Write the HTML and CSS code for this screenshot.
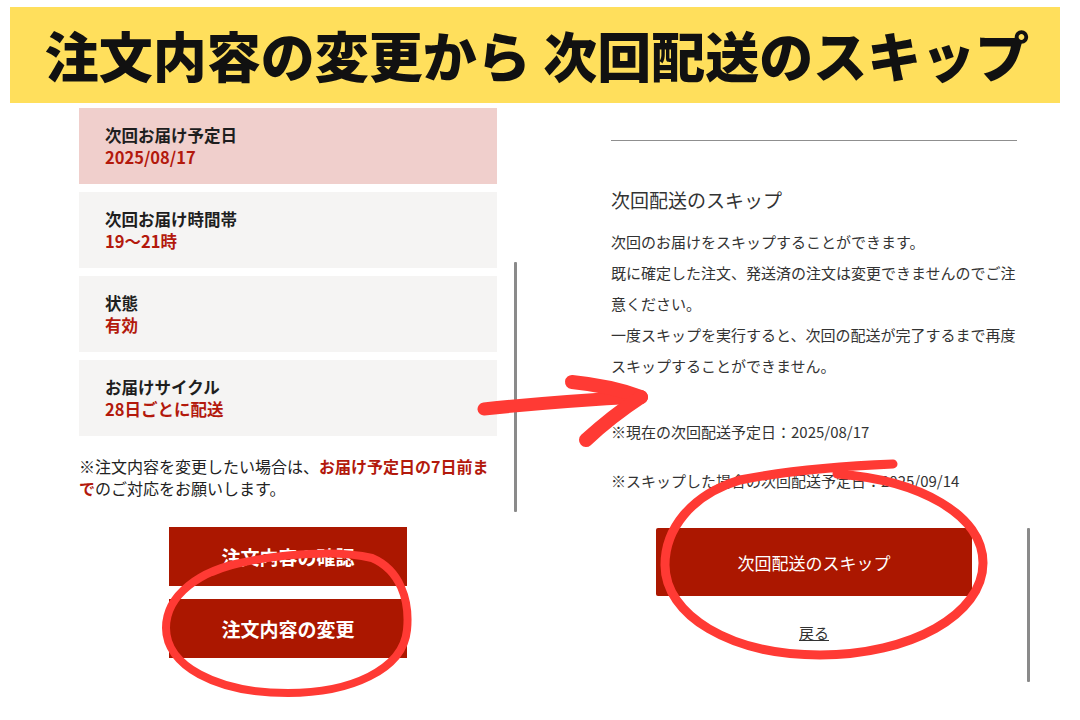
FILE: index.html
```html
<!DOCTYPE html>
<html lang="ja">
<head>
<meta charset="utf-8">
<title>注文内容の変更から 次回配送のスキップ</title>
<link rel="stylesheet" href="styles.css">
</head>
<body>
<div class="page">
  <header class="banner">
    <h1 class="title">注文内容の変更から 次回配送のスキップ</h1>
  </header>
  <main class="panels">
    <section class="left">
      <div class="cards">
        <div class="card card-hl">
          <p class="label">次回お届け予定日</p>
          <p class="value">2025/08/17</p>
        </div>
        <div class="card">
          <p class="label">次回お届け時間帯</p>
          <p class="value">19〜21時</p>
        </div>
        <div class="card">
          <p class="label">状態</p>
          <p class="value">有効</p>
        </div>
        <div class="card">
          <p class="label">お届けサイクル</p>
          <p class="value">28日ごとに配送</p>
        </div>
      </div>
      <p class="note">※注文内容を変更したい場合は、<strong class="em">お届け予定日の7日前ま<br>で</strong>のご対応をお願いします。</p>
      <div class="btns">
        <a class="btn btn-bold">注文内容の確認</a>
        <a class="btn btn-bold">注文内容の変更</a>
      </div>
    </section>
    <section class="right">
      <hr class="rule">
      <h2 class="heading">次回配送のスキップ</h2>
      <p class="para">次回のお届けをスキップすることができます。<br>既に確定した注文、発送済の注文は変更できませんのでご注<br>意ください。<br>一度スキップを実行すると、次回の配送が完了するまで再度<br>スキップすることができません。</p>
      <p class="para date-now">※現在の次回配送予定日：2025/08/17</p>
      <p class="para date-skip">※スキップした場合の次回配送予定日：2025/09/14</p>
      <div class="actions">
        <a class="btn btn-skip">次回配送のスキップ</a>
        <a class="back">戻る</a>
      </div>
    </section>
    <span class="scroll scroll-left"></span>
    <span class="scroll scroll-right"></span>
  </main>
  <svg class="marks" width="1080" height="720" viewBox="0 0 1080 720" aria-hidden="true">
    <g fill="none" stroke="#ff3a34" stroke-linecap="round" stroke-linejoin="round">
      <path d="M484,409 Q560,401 640,397" stroke-width="13"/>
      <path d="M572,382 Q612,386 641,397" stroke-width="14"/>
      <path d="M641,397 Q612,416 586,440" stroke-width="14"/>
      <path d="M212,572 C250,556 330,548 372,558 C400,570 410,600 407,630 C403,670 350,693 288,693 C215,693 166,665 166,628 C166,595 200,570 245,562" stroke-width="8"/>
      <path d="M893,464 C840,466 780,472 740,480 C690,495 665,530 665,565 C665,615 730,655 820,655 C910,655 983,615 983,563 C983,515 920,480 837,474" stroke-width="9"/>
    </g>
  </svg>
</div>
</body>
</html>
```
FILE: styles.css
```css
* { box-sizing: border-box; }
html, body { margin: 0; padding: 0; background: #fff; }
body {
  font-family: "Noto Sans CJK JP", "Noto Sans", sans-serif;
  color: #333;
}
.page {
  position: relative;
  width: 1080px;
  height: 720px;
  overflow: hidden;
}
.banner {
  margin: 7px 20px 0 10px;
  height: 96px;
  background: #ffdf5c;
  display: flex;
  align-items: center;
  justify-content: center;
}
.title {
  margin: 0;
  font-size: 54px;
  font-weight: 900;
  line-height: 1;
  color: #111;
  white-space: nowrap;
  padding-left: 4px;
}
.panels {
  position: relative;
  display: grid;
  grid-template-columns: 418px 406px;
  column-gap: 114px;
  padding-left: 79px;
}
.left { padding-top: 5px; }
.cards {
  display: flex;
  flex-direction: column;
  gap: 8px;
}
.card {
  height: 76px;
  background: #f5f4f3;
  padding-left: 26px;
  display: flex;
  flex-direction: column;
  justify-content: center;
}
.card-hl { background: #f0cfcc; }
.label, .value {
  margin: 0;
  font-size: 16.5px;
  line-height: 22px;
  font-weight: 700;
}
.label { color: #1e1e1e; }
.value { color: #b3190c; }
.note {
  margin: 19px 0 0;
  font-size: 16px;
  line-height: 22px;
  color: #222;
}
.em { color: #b3190c; font-weight: 700; }
.btns {
  margin-top: 28px;
  display: flex;
  flex-direction: column;
  align-items: center;
  gap: 13px;
}
.btn {
  display: flex;
  align-items: center;
  justify-content: center;
  background: #ab1700;
  color: #fff;
  text-decoration: none;
}
.btn-bold {
  width: 238px;
  height: 59px;
  font-size: 19px;
  font-weight: 700;
}
.right { padding-top: 37px; }
.rule {
  margin: 0;
  border: 0;
  height: 1px;
  background: #8f8f8f;
}
.heading {
  margin: 45px 0 0;
  font-size: 19px;
  line-height: 28px;
  font-weight: 400;
  color: #333;
}
.para {
  margin: 12px 0 0;
  font-size: 15px;
  line-height: 31px;
  color: #333;
  white-space: nowrap;
}
.date-now { margin-top: 35px; }
.date-skip { margin-top: 18px; }
.actions {
  margin-top: 32px;
  display: flex;
  flex-direction: column;
  align-items: center;
}
.btn-skip {
  width: 316px;
  height: 68px;
  font-size: 17px;
  font-weight: 400;
  border-radius: 2px;
}
.back {
  margin-top: 26px;
  font-size: 15px;
  line-height: 22px;
  color: #333;
  text-decoration: underline;
}
.scroll {
  position: absolute;
  width: 3px;
  background: #8a8a8a;
  border-radius: 1px;
}
.scroll-left { left: 514px; top: 159px; height: 250px; }
.scroll-right { left: 1027px; top: 425px; height: 154px; }
.marks {
  position: absolute;
  left: 0;
  top: 0;
  pointer-events: none;
}
```
